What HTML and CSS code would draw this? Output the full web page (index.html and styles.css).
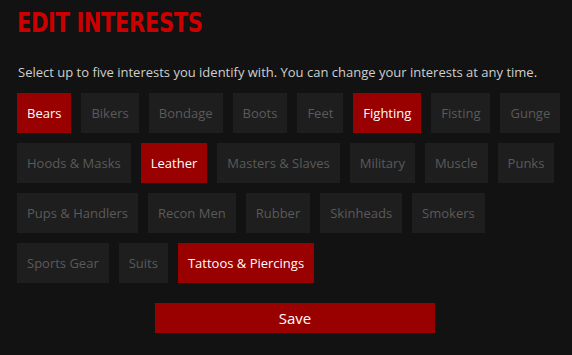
FILE: index.html
```html
<!DOCTYPE html>
<html lang="en">
<head>
    <meta charset="UTF-8">
    <meta name="viewport" content="width=device-width, initial-scale=1.0">
    <title>Edit Interests</title>

    <link rel="stylesheet" href="styles.css">
</head>
<body>
<div class="page">
    <h1 class="title">EDIT INTERESTS</h1>

    <p class="intro">Select up to five interests you identify with. You can change your interests at any time.</p>

    <div class="interests">
        <button class="chip selected">Bears</button>
        <button class="chip">Bikers</button>
        <button class="chip">Bondage</button>
        <button class="chip">Boots</button>
        <button class="chip">Feet</button>
        <button class="chip selected">Fighting</button>
        <button class="chip">Fisting</button>
        <button class="chip">Gunge</button>
        <button class="chip">Hoods &amp; Masks</button>
        <button class="chip selected">Leather</button>
        <button class="chip">Masters &amp; Slaves</button>
        <button class="chip">Military</button>
        <button class="chip">Muscle</button>
        <button class="chip">Punks</button>
        <button class="chip">Pups &amp; Handlers</button>
        <button class="chip">Recon Men</button>
        <button class="chip">Rubber</button>
        <button class="chip">Skinheads</button>
        <button class="chip">Smokers</button>
        <button class="chip">Sports Gear</button>
        <button class="chip">Suits</button>
        <button class="chip selected">Tattoos &amp; Piercings</button>
    </div>

    <div class="actions">
        <button class="save">Save</button>
    </div>
</div>
</body>
</html>
```

FILE: styles.css
```css
/* General page styles */
body {
    margin: 0;
    padding: 0;
    background-color: #121212;
    color: #cfcfcf;
    font-family: 'Open Sans', Arial, sans-serif;
    overflow: hidden;
}

.page {
    padding: 8px 0 0 17px;
}

/* Heading */
.title {
    display: inline-block;
    margin: 0;
    font-family: 'DejaVu Sans Condensed', 'Liberation Sans Narrow', Arial, sans-serif;
    font-weight: bold;
    font-size: 27px;
    line-height: 30px;
    color: #cc0000;
    letter-spacing: -0.5px;
    transform: scaleX(0.87);
    transform-origin: left center;
}

.intro {
    margin: 25px 0 0 1px;
    font-size: 13px;
    line-height: 18px;
    color: #cfcfcf;
}

/* Interest chips */
.interests {
    display: flex;
    flex-wrap: wrap;
    gap: 10px;
    margin-top: 12px;
}

.chip {
    height: 40px;
    padding: 0 10px;
    border: none;
    background-color: #1e1e1e;
    color: #5a5a5a;
    font-family: 'Open Sans', Arial, sans-serif;
    font-size: 13px;
    cursor: pointer;
}

.chip.selected {
    background-color: #990000;
    color: #ffffff;
}

/* Save button */
.actions {
    padding: 20px 0 0 138px;
}

.save {
    width: 280px;
    height: 30px;
    border: none;
    background-color: #990000;
    color: #ffffff;
    font-family: 'Open Sans', Arial, sans-serif;
    font-size: 15px;
    cursor: pointer;
}
```
